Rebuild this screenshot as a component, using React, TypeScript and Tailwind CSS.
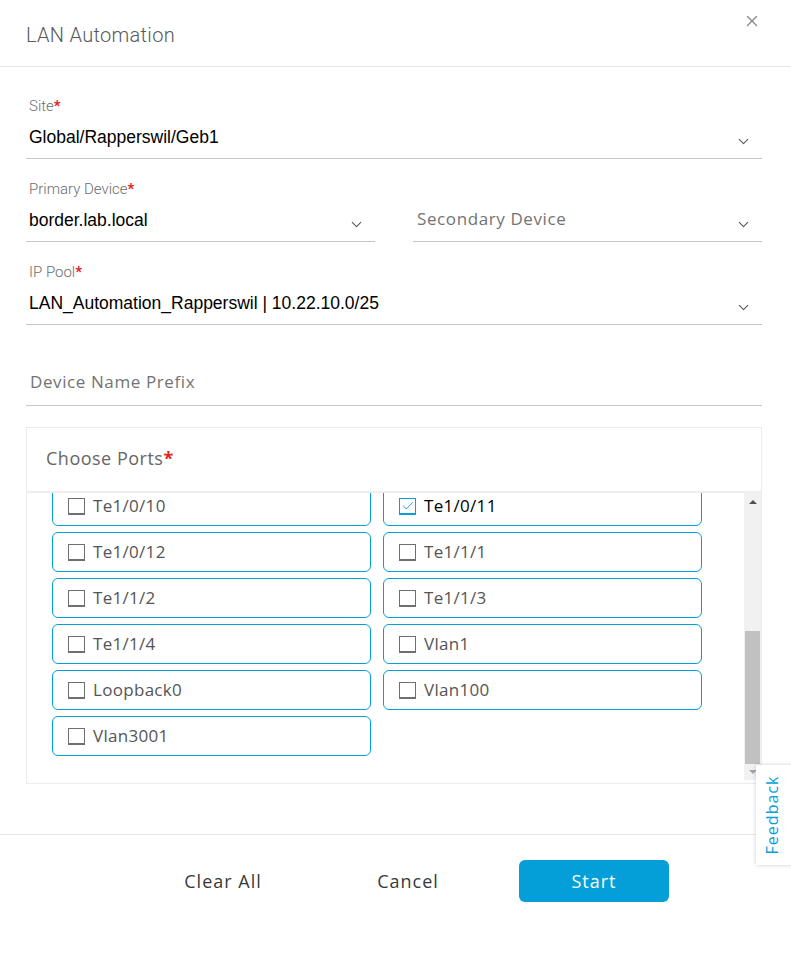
import { X, ChevronDown, Check } from 'lucide-react'

const ports: { name: string; checked?: boolean }[] = [
  { name: 'Te1/0/10' },
  { name: 'Te1/0/11', checked: true },
  { name: 'Te1/0/12' },
  { name: 'Te1/1/1' },
  { name: 'Te1/1/2' },
  { name: 'Te1/1/3' },
  { name: 'Te1/1/4' },
  { name: 'Vlan1' },
  { name: 'Loopback0' },
  { name: 'Vlan100' },
  { name: 'Vlan3001' },
]

function Label({ text }: { text: string }) {
  return (
    <div className="h-[18px] pl-[3px] text-[15px] leading-[18px] text-[#6d6d6d] font-['Roboto',sans-serif] font-light">
      {text}
      <span className="text-[#e2231a] font-bold">*</span>
    </div>
  )
}

function SelectField({ label, value, className = '' }: { label?: string; value: string; className?: string }) {
  return (
    <div className={`flex flex-col ${className}`}>
      <Label text={label ?? ''} />
      <div className="flex items-center justify-between border-b border-[#c6c6c6] h-[44px] pl-[3px] pr-[10px]">
        <span className="text-[17.5px] leading-[24px] text-black font-['Liberation_Sans',sans-serif]">{value}</span>
        <ChevronDown className="w-[17px] h-[17px] text-[#555] mt-[10px]" strokeWidth={1.5} />
      </div>
    </div>
  )
}

function PlaceholderSelect({ text, className = '' }: { text: string; className?: string }) {
  return (
    <div className={`flex flex-col ${className}`}>
      <div className="h-[18px]" />
      <div className="flex items-center justify-between border-b border-[#c6c6c6] h-[44px] pl-[4px] pr-[10px]">
        <span className="text-[17px] leading-[24px] text-[#737373] tracking-[0.6px] font-['Open_Sans',sans-serif] -mt-[2px]">{text}</span>
        <ChevronDown className="w-[17px] h-[17px] text-[#555] mt-[10px]" strokeWidth={1.5} />
      </div>
    </div>
  )
}

function PortItem({ name, checked }: { name: string; checked?: boolean }) {
  return (
    <div className="h-[40px] rounded-[6px] border border-[#049fd9] flex items-center pl-[15px] gap-[8px]">
      <span
        className={`w-[17px] h-[17px] flex items-center justify-center border ${
          checked ? 'border-[#049fd9] border-b-[2px] border-r-[1.5px]' : 'border-[#6f6f6f] border-b-[2px] border-r-[1.5px]'
        }`}
      >
        {checked && <Check className="w-[14px] h-[14px] text-[#049fd9]" strokeWidth={1.6} />}
      </span>
      <span
        className={`text-[17px] tracking-[0.3px] font-['Open_Sans',sans-serif] ${checked ? 'text-black' : 'text-[#555]'}`}
      >
        {name}
      </span>
    </div>
  )
}

export default function App() {
  return (
    <div className="w-[791px] h-[957px] bg-white relative overflow-hidden font-['Liberation_Sans',sans-serif]">
      {/* Header */}
      <div className="h-[67px] border-b border-[#e6e6e6] flex items-center justify-between pl-[26px] pr-[30px]">
        <h1 className="text-[20px] text-[#58585b] font-['Roboto',sans-serif] font-light tracking-[0.3px] mt-[3px]">LAN Automation</h1>
        <X className="w-[18px] h-[18px] text-[#8a8a8a] self-start mt-[12px]" strokeWidth={1.8} />
      </div>

      {/* Form */}
      <div className="px-[26px] pr-[29px] pt-[30px] flex flex-col gap-[21px]">
        <SelectField label="Site" value="Global/Rapperswil/Geb1" />
        <div className="flex gap-[38px]">
          <SelectField label="Primary Device" value="border.lab.local" className="w-[349px]" />
          <PlaceholderSelect text="Secondary Device" className="flex-1" />
        </div>
        <SelectField label="IP Pool" value="LAN_Automation_Rapperswil | 10.22.10.0/25" />
        <div className="h-[60px] flex items-end border-b border-[#c6c6c6] pl-[4px] pb-[11px]">
          <span className="text-[17px] text-[#737373] tracking-[0.6px] font-['Open_Sans',sans-serif]">Device Name Prefix</span>
        </div>

        {/* Choose Ports */}
        <div className="border border-[#ececec] h-[357px] flex flex-col">
          <div className="h-[65px] border-b-[2px] border-[#eeeeee] flex items-center pl-[19px]">
            <span className="text-[18px] text-[#666] tracking-[0.5px] font-['Open_Sans',sans-serif] -mt-[2px]">
              Choose Ports<span className="text-[#e2231a] font-bold">*</span>
            </span>
          </div>
          <div className="flex-1 flex overflow-hidden">
            <div className="flex-1 overflow-hidden">
              <div className="grid grid-cols-[319px_319px] gap-x-[12px] gap-y-[6px] pl-[25px] mt-[-7px]">
                {ports.map((p) => (
                  <PortItem key={p.name} name={p.name} checked={p.checked} />
                ))}
              </div>
            </div>
            <div className="w-[17px] bg-[#f1f1f1] flex flex-col items-center mb-[3px]">
              <div className="h-[18px] flex items-center justify-center">
                <div className="w-0 h-0 border-l-[4px] border-r-[4px] border-b-[4px] border-l-transparent border-r-transparent border-b-[#505050]" />
              </div>
              <div className="flex-1" />
              <div className="w-[15px] h-[133px] bg-[#c1c1c1]" />
              <div className="h-[16px] flex items-center justify-center">
                <div className="w-0 h-0 border-l-[4px] border-r-[4px] border-t-[4px] border-l-transparent border-r-transparent border-t-[#a3a3a3]" />
              </div>
            </div>
          </div>
        </div>
      </div>

      {/* Footer */}
      <div className="absolute left-0 right-0 top-[834px] border-t border-[#e6e8ef] h-[123px] flex items-start pt-[25px] pl-[163px]">
        <button className="w-[120px] h-[42px] text-[18px] text-[#39393b] tracking-[1px] font-['Open_Sans',sans-serif]">Clear All</button>
        <button className="ml-[65px] w-[120px] h-[42px] text-[18px] text-[#39393b] tracking-[1px] font-['Open_Sans',sans-serif]">Cancel</button>
        <button className="ml-[51px] w-[150px] h-[42px] rounded-[6px] bg-[#049fd9] text-white text-[18px] tracking-[1px] font-['Open_Sans',sans-serif]">
          Start
        </button>
      </div>

      {/* Feedback tab */}
      <div className="absolute left-[756px] top-[765px] w-[40px] h-[100px] bg-white shadow-[0_0_4px_rgba(0,0,0,0.2)] flex items-center justify-center">
        <span className="-rotate-90 text-[16px] text-[#049fd9] tracking-[1px] font-['Open_Sans',sans-serif] whitespace-nowrap -ml-[8px]">
          Feedback
        </span>
      </div>
    </div>
  )
}
